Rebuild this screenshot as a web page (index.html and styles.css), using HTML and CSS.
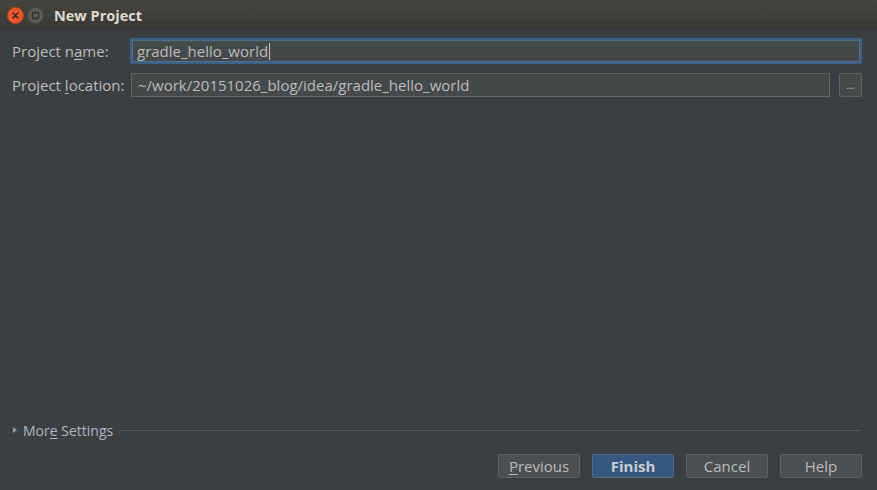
FILE: index.html
```html
<!DOCTYPE html>
<html>
<head>
<meta charset="utf-8">
<link rel="stylesheet" href="styles.css">
</head>
<body>
<div class="window">
  <div class="titlebar">
    <div class="wbtn close"><svg width="17" height="17" viewBox="0 0 17 17"><circle cx="8.5" cy="8.5" r="8" fill="#e9582f" stroke="#b8401e" stroke-width="1"/><path d="M6 6 L11 11 M11 6 L6 11" stroke="#3b2420" stroke-width="1.4" stroke-linecap="round"/></svg></div>
    <div class="wbtn max"><svg width="17" height="17" viewBox="0 0 17 17"><circle cx="8.5" cy="8.5" r="8" fill="#5c5b57" stroke="#45443f" stroke-width="1"/><rect x="5.5" y="5.5" width="6" height="6" rx="1" fill="none" stroke="#2f2e2b" stroke-width="1.4"/></svg></div>
    <div class="title">New Project</div>
  </div>
  <div class="content">
    <div class="form">
      <div class="row">
        <label class="lbl">Project n<u>a</u>me:</label>
        <div class="field focus">gradle_hello_world<span class="caret"></span></div>
      </div>
      <div class="row">
        <label class="lbl">Project <u>l</u>ocation:</label>
        <div class="field loc">~/work/20151026_blog/idea/gradle_hello_world</div>
        <div class="browse">…</div>
      </div>
    </div>
    <div class="more">
      <span class="tri"></span>
      <span class="more-text">Mor<u>e</u> Settings</span>
      <span class="line"></span>
    </div>
    <div class="buttons">
      <div class="btn"><u>P</u>revious</div>
      <div class="btn primary">Finish</div>
      <div class="btn">Cancel</div>
      <div class="btn">Help</div>
    </div>
  </div>
</div>
</body>
</html>
```

FILE: styles.css
```css
html, body { margin: 0; padding: 0; }
body {
  width: 877px; height: 490px; overflow: hidden;
  background: #3c3f41;
  font-family: "Open Sans", "DejaVu Sans", sans-serif;
  font-size: 15px;
  color: #bbbbbb;
}
.window { display: flex; flex-direction: column; height: 490px; }
.titlebar {
  height: 30px; flex: none;
  background: linear-gradient(#45443f, #3a3935);
  display: flex; align-items: center;
  padding-left: 7px;
  box-sizing: border-box;
}
.wbtn { width: 17px; height: 17px; margin-right: 3px; display: flex; }
.wbtn svg { display: block; }
.title {
  margin-left: 7px;
  color: #dfdbd2;
  font-weight: bold;
  font-size: 14.5px;
  margin-top: 1px;
}
.content { flex: 1; display: flex; flex-direction: column; padding: 0 15px 12px 12px; }
.form { display: flex; flex-direction: column; gap: 9px; padding-top: 8px; }
.row { display: flex; align-items: center; }
.lbl { width: 118px; flex: none; white-space: nowrap; }
.lbl u, .more u, .btn u { text-decoration: underline; text-underline-offset: 2px; }
.field {
  flex: 1; height: 24px; box-sizing: border-box;
  background: #45494a;
  border: 1px solid #646464;
  padding: 0 6px;
  display: flex; align-items: center;
  white-space: nowrap;
}
.field.focus {
  height: 26px;
  border: 2px solid #3d6185;
  padding-left: 5px;
  box-shadow: inset 0 0 0 1px #4b6f93;
}
.caret { display: inline-block; width: 1px; height: 17px; background: #bbbbbb; margin-left: 1px; }
.field.loc { margin-left: 1px; }
.browse {
  width: 23px; height: 24px; box-sizing: border-box; margin-left: 9px;
  border: 1px solid #5e6060; border-radius: 2px;
  background: #45494a;
  display: flex; align-items: center; justify-content: center;
  font-size: 10px; color: #cfcfcf; line-height: 1;
}
.more {
  margin-top: auto;
  display: flex; align-items: center;
  height: 18px;
  margin-bottom: 15px;
}
.tri {
  width: 0; height: 0; margin-left: 1px; margin-right: 6px;
  border-left: 4px solid #9a9a9a;
  border-top: 3.5px solid transparent;
  border-bottom: 3.5px solid transparent;
}
.more-text { color: #a9b7c6; white-space: nowrap; font-size: 14px; }
.line { flex: 1; height: 1px; background: #555859; margin-left: 6px; }
.buttons { display: flex; justify-content: flex-end; gap: 12px; }
.btn {
  width: 82px; height: 24px; box-sizing: border-box;
  border: 1px solid #5e6060; border-radius: 2px;
  background: #4b4f51;
  display: flex; align-items: center; justify-content: center;
}
.btn.primary {
  background: #365880;
  border-color: #4c708c;
  font-weight: bold;
  color: #c6cdd4;
}
```
